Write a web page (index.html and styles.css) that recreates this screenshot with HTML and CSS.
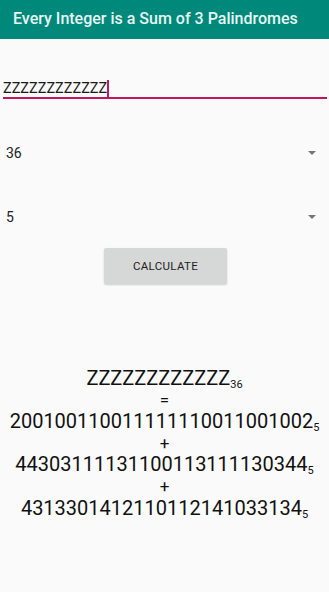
FILE: index.html
```html
<!DOCTYPE html>
<html>
<head>
<meta charset="utf-8">
<link rel="stylesheet" href="styles.css">
</head>
<body>
<header class="appbar">Every Integer is a Sum of 3 Palindromes</header>
<main class="content">
  <div class="field"><span class="field-text">ZZZZZZZZZZZZ</span><span class="caret"></span></div>
  <div class="spinner spinner-first"><span>36</span><span class="arrow"></span></div>
  <div class="spinner spinner-second"><span>5</span><span class="arrow"></span></div>
  <div class="btn-row"><button class="btn">CALCULATE</button></div>
  <div class="result">
    <div class="line">ZZZZZZZZZZZZ<sub>36</sub></div>
    <div class="line sep">=</div>
    <div class="line">200100110011111110011001002<sub>5</sub></div>
    <div class="line sep">+</div>
    <div class="line">44303111131100113111130344<sub>5</sub></div>
    <div class="line sep">+</div>
    <div class="line">4313301412110112141033134<sub>5</sub></div>
  </div>
</main>
</body>
</html>
```
FILE: styles.css
```css
html, body {
  margin: 0;
  padding: 0;
  background: #fafafa;
  font-family: Roboto, "Noto Sans", sans-serif;
  width: 329px;
  height: 592px;
  overflow: hidden;
}
.appbar {
  height: 39px;
  background: #00897b;
  color: #e8f6f4;
  font-size: 16px;
  font-weight: 500;
  padding-left: 13px;
  line-height: 37px;
  box-sizing: border-box;
  white-space: nowrap;
}
.content {
  display: flex;
  flex-direction: column;
}
.field {
  margin: 38px 2px 0 3px;
  height: 20px;
  border-bottom: 2px solid #c2185b;
  display: flex;
  align-items: flex-end;
}
.field-text {
  font-size: 14.5px;
  color: #1a1a1a;
  line-height: 17px;
}
.caret {
  width: 1.5px;
  height: 17px;
  background: #c2185b;
}
.spinner {
  display: flex;
  justify-content: space-between;
  align-items: center;
  padding: 0 13px 0 6px;
  font-size: 14px;
  color: #222;
  height: 20px;
}
.spinner-first { margin-top: 44px; }
.spinner-second { margin-top: 44px; }
.arrow {
  width: 0;
  height: 0;
  border-left: 4px solid transparent;
  border-right: 4px solid transparent;
  border-top: 4px solid #757575;
}
.btn-row {
  display: flex;
  justify-content: center;
  margin-top: 21px;
  padding-left: 2px;
}
.btn {
  width: 123px;
  height: 36px;
  background: #d6d7d7;
  border: none;
  border-radius: 2px;
  box-shadow: 0 1px 2px rgba(0,0,0,0.18);
  font-family: Roboto, sans-serif;
  font-size: 11.5px;
  font-weight: 400;
  letter-spacing: 0.3px;
  color: #1e1e1e;
  padding: 0;
}
.result {
  margin-top: 84px;
  display: flex;
  flex-direction: column;
  align-items: center;
  font-size: 20px;
  color: #111;
}
.line {
  height: 21.6px;
  line-height: 21.6px;
  white-space: nowrap;
}
.line.sep {
  font-size: 17px;
}
.line sub {
  font-size: 11px;
  vertical-align: -3px;
  line-height: 0;
}
```
